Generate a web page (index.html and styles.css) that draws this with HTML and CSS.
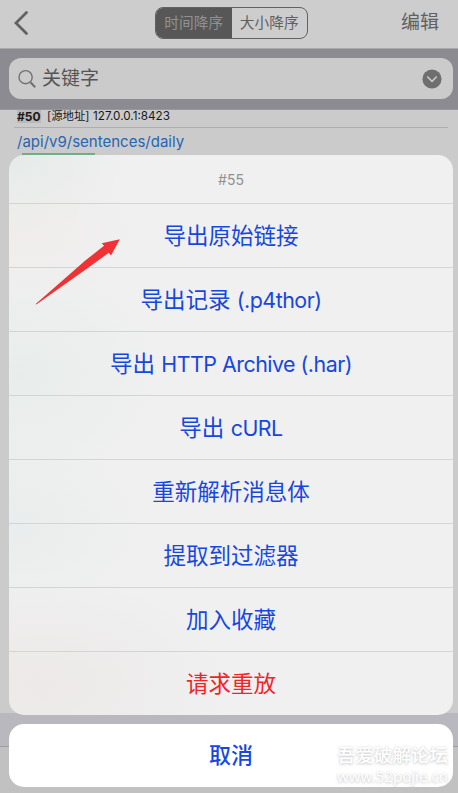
FILE: index.html
```html
<!DOCTYPE html>
<html lang="zh-CN">
<head>
<meta charset="utf-8">
<title>导出</title>
<link rel="stylesheet" href="styles.css">
</head>
<body>
<div class="screen">
  <header class="nav">
    <svg class="back" width="16" height="26" viewBox="0 0 16 26"><path d="M13.5 2.5 3 13 13.5 23.5" fill="none" stroke="#626262" stroke-width="2.8" stroke-linecap="round" stroke-linejoin="miter"/></svg>
    <div class="segments">
      <span class="segment selected">时间降序</span>
      <span class="segment">大小降序</span>
    </div>
    <span class="edit">编辑</span>
  </header>
  <div class="search-bar">
    <div class="search">
      <svg width="20" height="20" viewBox="0 0 20 20" fill="none" stroke="#717171" stroke-width="1.4"><circle cx="7.6" cy="8.2" r="6.6"/><path d="m12.5 13.2 4.7 5" stroke-width="2"/></svg>
      <span class="keyword">关键字</span>
      <svg width="20" height="20" viewBox="0 0 20 20"><circle cx="10" cy="10" r="9.6" fill="#6e706f"/><path d="m5.7 8 4.3 4.3L14.3 8" fill="none" stroke="#cbcbcb" stroke-width="1.6" stroke-linecap="round"/></svg>
    </div>
  </div>
  <main class="list">
    <div class="source"><b class="number">#50</b><span class="label">[源地址]</span><span class="address">127.0.0.1:8423</span></div>
    <div class="path">/api/v9/sentences/daily</div>
    <div class="progress"></div>
  </main>
  <div class="toolbar"></div>
  <div class="bottom"></div>

  <div class="overlay">
    <div class="sheet">
      <div class="title">#55</div>
      <div class="action">导出原始链接</div>
      <div class="action">导出记录 <span class="latin">(.p4thor)</span></div>
      <div class="action">导出 <span class="latin">HTTP Archive (.har)</span></div>
      <div class="action">导出 <span class="latin">cURL</span></div>
      <div class="action">重新解析消息体</div>
      <div class="action">提取到过滤器</div>
      <div class="action">加入收藏</div>
      <div class="action danger">请求重放</div>
    </div>
    <div class="cancel">取消</div>
  </div>
  <svg class="arrow" width="86" height="68" viewBox="0 0 86 68"><path d="M.7 66 50 22.8 69 7.8 66.8 5.2 84.8 1.2 76 17.5 73.8 14.8 50 32 1.3 66.6Z" fill="#ef3235"/></svg>
  <div class="watermark"><div class="forum">吾爱破解论坛</div><div class="site">www.52pojie.cn</div></div>
</div>
</body>
</html>
```
FILE: styles.css
```css
* { box-sizing: border-box; }
body {
  margin: 0;
  font-family: Inter, "Noto Sans CJK SC", sans-serif;
}
.screen {
  position: relative;
  display: flex;
  flex-direction: column;
  width: 458px;
  height: 793px;
  overflow: hidden;
  background: #cbcbcb;
}
.nav {
  display: grid;
  grid-template-columns: 142px 153px 1fr;
  align-items: center;
  height: 49px;
  padding: 0 19px 3px 13px;
  border-bottom: 1px solid #a9a9ac;
  background: #cdcdcd;
  color: #606060;
}
.segments {
  display: flex;
  height: 32px;
  border: 1px solid #626262;
  border-radius: 8px;
  overflow: hidden;
}
.segment {
  flex: 1;
  font-size: 14.7px;
  line-height: 31px;
  text-align: center;
}
.selected { background: #575757; color: #919191; }
.edit { font-size: 19px; line-height: 30px; text-align: right; }
.search-bar {
  height: 61px;
  padding: 9px 5px 12px 9px;
  background: #8c8b91;
  border-bottom: 1px solid #98979c;
}
.search {
  display: flex;
  align-items: center;
  height: 41px;
  padding: 0 11px 0 9px;
  border-radius: 12px;
  background: #cbcbcb;
  color: #555;
}
.keyword { flex: 1; margin-left: 4px; font-size: 19px; line-height: 28px; }
.list { flex: 1; padding: 0 10px 0 14px; }
.source {
  display: flex;
  align-items: center;
  height: 18px;
  padding-bottom: 5px;
  padding-left: 3px;
  border-bottom: 1px solid #aeaeae;
  font-size: 11px;
  line-height: 13px;
  color: #181818;
}
.number { width: 24px; background: #b9b9b9; font-size: 12px; }
.label { width: 46px; margin-left: 6px; font-size: 11.4px; white-space: nowrap; }
.address { font-size: 11.7px; }
.path { height: 25px; padding-left: 3px; font-size: 15px; line-height: 28px; color: #2864b2; }
.progress { width: 73px; height: 4px; margin-left: 8px; background: #73ad86; }
.toolbar { height: 34px; border-bottom: 1px solid #9d9da2; background: #b9b8be; }
.bottom { height: 46px; background: #c1c1c1; }
.overlay { position: absolute; top: 154.5px; left: 9px; width: 444px; text-align: center; }
.sheet {
  height: 560px;
  border-radius: 15px;
  overflow: hidden;
  background:
    radial-gradient(ellipse 120px 80px at 0 0, #e5ebe8, transparent),
    radial-gradient(ellipse 110px 80px at 20px 75px, #f0edec, transparent),
    radial-gradient(ellipse 150px 120px at 10px 220px, #e8edeb, transparent),
    radial-gradient(ellipse 130px 90px at 10px 370px, #eaeded, transparent),
    radial-gradient(ellipse 190px 110px at 30px 530px, #ece9e8, transparent),
    #f0f0f0;
}
.title { height: 48.5px; font-size: 14px; line-height: 50px; color: #909090; }
.action {
  height: 64px;
  border-top: 1px solid #d3d4d4;
  font-size: 22.5px;
  line-height: 63px;
  color: #1747df;
  white-space: nowrap;
}
.latin { font-size: 21.4px; letter-spacing: -.5px; }
.danger { color: #ee2529; }
.cancel {
  height: 63.5px;
  margin-top: 9px;
  border-radius: 15px;
  background: #fff;
  font-size: 22px;
  font-weight: 500;
  line-height: 63px;
  color: #1747df;
}
.arrow { position: absolute; left: 35px; top: 238px; }
.watermark {
  position: absolute;
  left: 337px;
  top: 744px;
  width: 114px;
  color: #fff;
  text-shadow: 0 1px 3px #ccc, 0 0 2px #ddd;
  white-space: nowrap;
}
.forum { font-size: 18.5px; font-weight: 500; line-height: 23px; }
.site { font-family: "Noto Sans", sans-serif; font-size: 15px; line-height: 19px; }
```
